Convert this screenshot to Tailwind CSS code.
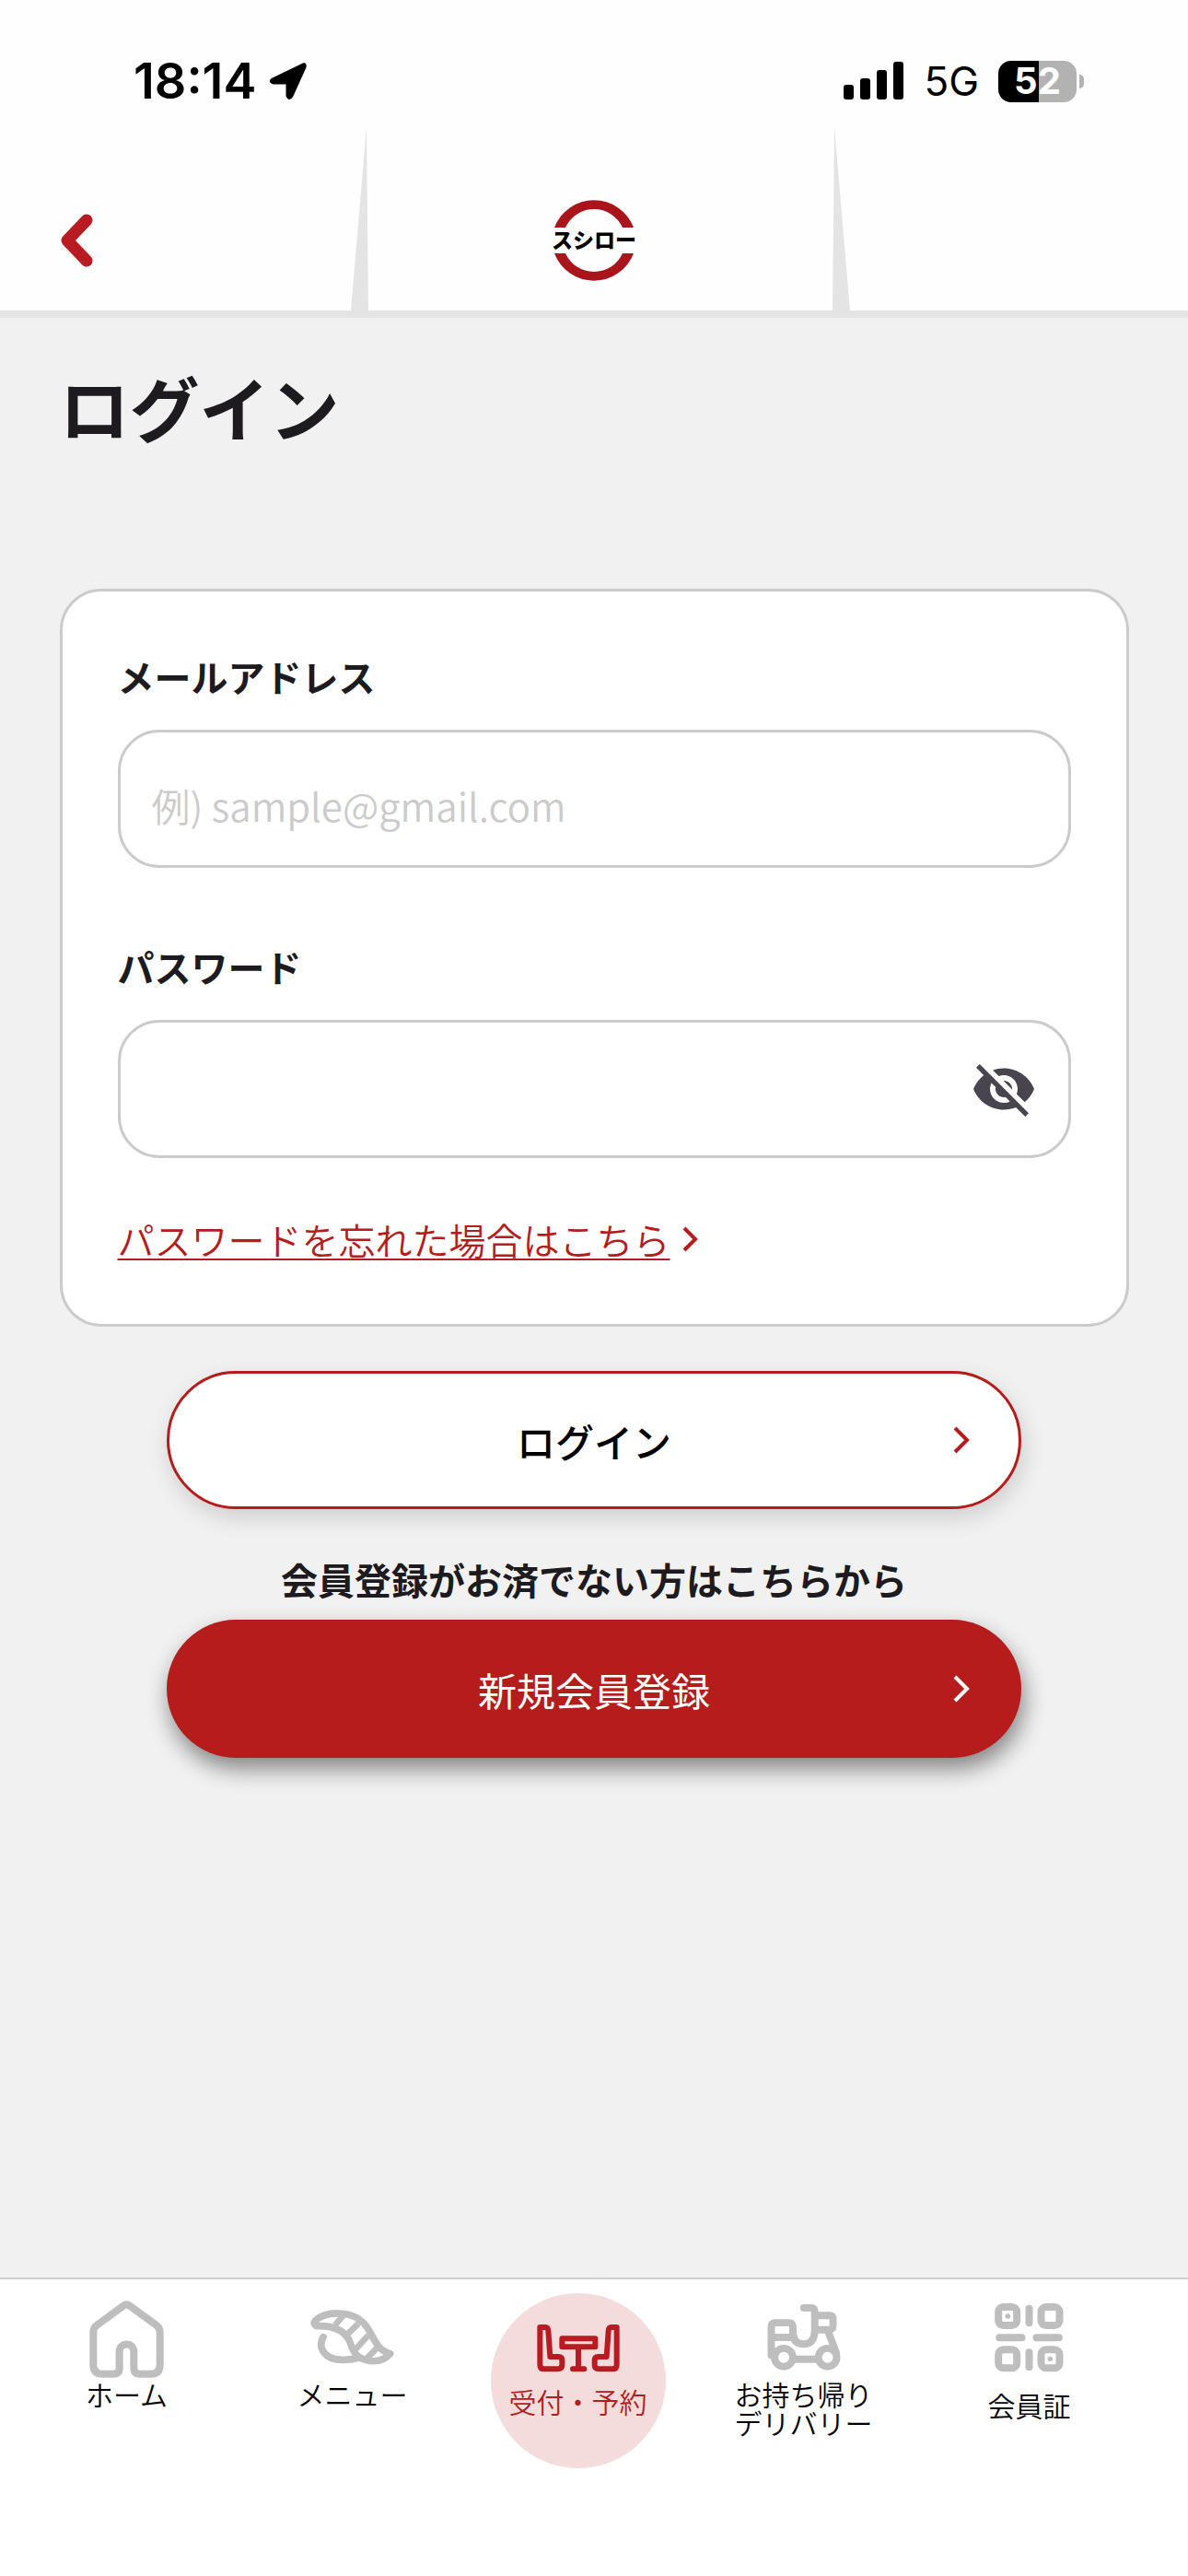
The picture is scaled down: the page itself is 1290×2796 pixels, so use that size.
<!DOCTYPE html>
<html lang="ja">
  <head>
    <meta charset="UTF-8" />
    <meta name="viewport" content="width=device-width, initial-scale=1.0" />
    <title>ログイン</title>
    <script src="https://cdn.jsdelivr.net/npm/@tailwindcss/browser@4"></script>
  </head>
  <body
    class="min-h-screen flex flex-col bg-[#f1f1f1] text-[#1d1b20] font-['Noto_Sans_CJK_JP',sans-serif]"
  >
    <!-- Header -->
    <header class="bg-[#fefefe] border-b-8 border-[#e4e4e4]">
      <!-- Status bar -->
      <div
        class="h-[138px] pt-[38px] pl-[145px] pr-[113px] flex items-center justify-between text-black font-['Inter',sans-serif]"
      >
        <div class="flex items-center gap-[14px]">
          <span class="text-[54px] leading-none font-semibold">18:14</span>
          <svg class="w-[42px] h-[42px]" viewBox="0 0 42 42">
            <path
              d="M4 19 37 3Q40 2 39 6L25 37Q22 42 20 37V23H5Q0 22 4 19Z"
              stroke="#000"
              stroke-width="3"
              stroke-linejoin="round"
            />
          </svg>
        </div>
        <div class="flex items-center gap-[21px]">
          <svg class="w-[66px] h-[42px]" viewBox="0 0 66 42">
            <rect x="0" y="25" width="11" height="16" rx="3" />
            <rect x="18" y="18" width="11" height="23" rx="3" />
            <rect x="36" y="9" width="11" height="32" rx="3" />
            <rect x="54" y="0" width="11" height="41" rx="3" />
          </svg>
          <span class="text-[44px] leading-none">5G</span>
          <div class="flex items-center gap-[3px]">
            <div
              class="w-[85px] h-[45px] rounded-[14px] bg-linear-to-r from-black from-52% to-[#b2b2b2] to-52% flex items-center justify-center text-white text-[40px] leading-none font-bold"
            >
              52
            </div>
            <div class="w-[5px] h-[15px] rounded-r-full bg-[#b2b2b2]"></div>
          </div>
        </div>
      </div>

      <!-- Logo bar -->
      <div class="h-[199px] grid grid-cols-[381fr_19px_504fr_19px_367fr]">
        <div class="flex items-center pt-[46px] pl-[65px]">
          <button type="button" aria-label="戻る">
            <svg class="w-9 h-[58px]" viewBox="0 0 36 58" fill="none">
              <path
                d="M29 7 8 29 29 51"
                stroke="#b81c22"
                stroke-width="13"
                stroke-linecap="round"
                stroke-linejoin="round"
              />
            </svg>
          </button>
        </div>
        <svg class="w-full h-[199px]" viewBox="0 0 19 199">
          <path d="M17 0 19 199H0Z" fill="#e4e4e4" />
        </svg>
        <div class="flex items-center justify-center pt-[46px] pr-[14px]">
          <svg class="w-24 h-24" viewBox="0 0 96 96">
            <path
              d="M5 34A46 46 0 0 1 91 34H79A34 34 0 0 0 17 34ZM5 62A46 46 0 0 0 91 62H79A34 34 0 0 1 17 62Z"
              fill="#a9151b"
            />
            <text
              x="48"
              y="56"
              text-anchor="middle"
              font-size="23"
              font-weight="900"
              fill="#000"
            >
              スシロー
            </text>
          </svg>
        </div>
        <svg class="w-full h-[199px]" viewBox="0 0 19 199">
          <path d="M2 0 19 199H0Z" fill="#e4e4e4" />
        </svg>
      </div>
    </header>

    <!-- Main Content -->
    <main class="flex-1 flex flex-col items-center">
      <h1 class="w-[90%] pt-12 text-[76px] leading-[96px] font-bold">
        ログイン
      </h1>

      <form class="w-full mt-[150px] flex flex-col items-center">
        <div
          class="w-[90%] px-[60px] pt-[62px] pb-[62px] bg-white border-3 border-[#cbcbcb] rounded-[45px]"
        >
          <label for="email" class="block text-[40px] leading-[60px] font-bold"
            >メールアドレス</label
          >
          <input
            type="email"
            id="email"
            placeholder="例) sample@gmail.com"
            class="w-full h-[150px] mt-7 px-[34px] pt-3 bg-white border-3 border-[#cbcbcb] rounded-[45px] text-[42px] font-[350] placeholder:text-[#cbcbcb]"
          />

          <label
            for="password"
            class="block mt-[77px] text-[40px] leading-[60px] font-bold"
            >パスワード</label
          >
          <div
            class="h-[150px] mt-7 pl-[34px] pr-[34px] flex items-center border-3 border-[#cbcbcb] rounded-[45px]"
          >
            <input
              type="password"
              id="password"
              class="flex-1 h-full text-[42px] outline-none"
            />
            <button type="button" id="togglePassword" aria-label="パスワードを表示">
              <svg class="w-[72px] h-[72px]" viewBox="0 0 24 24" fill="#49454f">
                <path
                  d="M12 7c2.76 0 5 2.24 5 5 0 .65-.13 1.26-.36 1.83l2.92 2.92c1.51-1.26 2.7-2.89 3.43-4.75-1.73-4.39-6-7.5-11-7.5-1.4 0-2.74.25-3.98.7l2.16 2.16C10.74 7.13 11.35 7 12 7zM2 4.27l2.28 2.28.46.46C3.08 8.3 1.78 10.02 1 12c1.73 4.39 6 7.5 11 7.5 1.55 0 3.03-.3 4.38-.84l.42.42L19.73 22 21 20.73 3.27 3 2 4.27zM7.53 9.8l1.55 1.55c-.05.21-.08.43-.08.65 0 1.66 1.34 3 3 3 .22 0 .44-.03.65-.08l1.55 1.55c-.67.33-1.41.53-2.2.53-2.76 0-5-2.24-5-5 0-.79.2-1.53.53-2.2zm4.31-.78l3.15 3.15.02-.16c0-1.66-1.34-3-3-3l-.17.01z"
                />
              </svg>
            </button>
          </div>

          <a
            href="#"
            class="mt-[58px] flex items-center gap-3 text-[40px] leading-[60px] font-[350] text-[#b51c1c]"
          >
            <span class="underline decoration-2 underline-offset-4"
              >パスワードを忘れた場合はこちら</span
            >
            <svg class="w-[18px] h-7" viewBox="0 0 18 28" fill="none">
              <path d="M3 2 15 14 3 26" stroke="currentColor" stroke-width="4" />
            </svg>
          </a>
        </div>

        <button
          type="submit"
          class="w-[72%] h-[150px] mt-12 px-[53px] flex items-center justify-between bg-white border-3 border-[#b51c1c] rounded-full text-[42px] font-medium text-black shadow-[3px_9px_24px_rgba(0,0,0,0.15)]"
        >
          <span class="w-[18px]"></span>
          ログイン
          <svg class="w-[18px] h-[30px] text-[#b51c1c]" viewBox="0 0 18 30" fill="none">
            <path d="M2 2 15 15 2 28" stroke="currentColor" stroke-width="4" />
          </svg>
        </button>
      </form>

      <p class="mt-[46px] text-[40px] leading-[60px] font-bold">
        会員登録がお済でない方はこちらから
      </p>
      <a
        href="#"
        class="w-[72%] h-[150px] mt-[14px] px-14 flex items-center justify-between bg-[#b51c1c] rounded-full text-[42px] text-white shadow-[3px_12px_24px_rgba(0,0,0,0.45)]"
      >
        <span class="w-[18px]"></span>
        新規会員登録
        <svg class="w-[18px] h-[30px]" viewBox="0 0 18 30" fill="none">
          <path d="M2 2 15 15 2 28" stroke="currentColor" stroke-width="4" />
        </svg>
      </a>
    </main>

    <!-- Bottom navigation -->
    <nav
      class="h-[324px] pl-[15px] pr-[50px] pt-[15px] grid grid-cols-5 justify-items-center items-start bg-white border-t-2 border-[#cfcfcf] text-[30px] leading-[31px] font-[350] text-black text-center"
    >
      <a href="#" class="flex flex-col items-center pt-2">
        <svg
          class="w-[81px] h-[84px] mb-[2px]"
          viewBox="111 109 243 252"
          fill="none"
          stroke="#bebebe"
          stroke-width="24"
          stroke-linejoin="round"
        >
          <path
            d="M222 126Q232 118 243 126L329 189Q341 198 341 212V318Q341 348 311 348H276Q256 348 256 328V275A23 23 0 0 0 209 275V328Q209 348 189 348H154Q124 348 124 318V212Q124 198 136 189Z"
          />
        </svg>
        ホーム
      </a>
      <a href="#" class="flex flex-col items-center pt-[18px]">
        <svg
          class="w-[91px] h-[60px] mb-4"
          viewBox="831 143 273 180"
          fill="none"
          stroke="#bebebe"
          stroke-width="23"
          stroke-linecap="round"
          stroke-linejoin="round"
        >
          <path
            d="M848 178C870 158 900 154 925 155C965 156 1000 172 1022 210C1040 240 1050 275 1091 286C1075 306 1050 311 1030 310C990 306 975 290 963 256C950 215 915 193 850 196Q838 188 848 178Z"
          />
          <path d="M873 232C855 265 875 308 940 306Q970 306 990 298" />
          <path
            d="M938 162 912 192M988 188 950 224M1020 226 976 274M1048 268 1012 304"
            stroke-width="20"
            stroke-linecap="butt"
          />
        </svg>
        メニュー
      </a>
      <a
        href="#"
        class="w-[190px] h-[190px] pt-[34px] flex flex-col items-center rounded-full bg-[#f4dcdc] text-[#b51c1c]"
      >
        <svg
          class="w-[90px] h-[52px] mb-4"
          viewBox="248 189 270 156"
          fill="none"
          stroke="#b81c22"
          stroke-width="18"
          stroke-linejoin="round"
          stroke-linecap="round"
        >
          <path
            d="M258 198H276Q284 198 285 210L291 294H318Q330 294 330 306V321Q330 334 316 334H272Q258 334 258 320Z"
          />
          <path
            d="M508 198H490Q482 198 481 210L475 294H448Q436 294 436 306V321Q436 334 450 334H494Q508 334 508 320Z"
          />
          <path d="M330 235H438V262H330ZM383 264V330M365 334H402" />
        </svg>
        受付・予約
      </a>
      <a href="#" class="flex flex-col items-center pt-3">
        <svg
          class="w-20 h-[72px] mb-[10px]"
          viewBox="158 122 241 218"
          fill="none"
          stroke="#bebebe"
          stroke-width="24"
          stroke-linejoin="round"
          stroke-linecap="round"
        >
          <circle cx="212" cy="297" r="30" />
          <circle cx="356" cy="297" r="30" />
          <path
            d="M250 303H320M278 134H302Q314 134 314 148V210Q312 253 278 253Q242 253 242 215V197Q242 183 228 183H185Q171 183 171 197V290M174 231H246"
          />
          <path
            d="M316 159H362Q374 159 374 171V192Q374 206 362 206H316M358 212 384 280"
          />
        </svg>
        お持ち帰り<br />デリバリー
      </a>
      <a href="#" class="flex flex-col items-center pt-[11px]">
        <svg
          class="w-[75px] h-[75px] mb-5"
          viewBox="902 119 224 225"
          fill="none"
          stroke="#bebebe"
          stroke-width="24"
          stroke-linecap="round"
        >
          <rect x="914" y="131" width="60" height="60" rx="16" />
          <rect x="1053" y="131" width="60" height="60" rx="16" />
          <rect x="914" y="270" width="60" height="60" rx="16" />
          <rect x="1053" y="270" width="60" height="60" rx="16" />
          <path d="M1014 136V183M1014 279V327M917 231H990M1038 231H1111" />
          <path d="M944 161h1M1082 300h1" stroke-width="16" />
        </svg>
        会員証
      </a>
    </nav>

    <script>
      // パスワードの表示切り替え
      const passwordInput = document.getElementById("password");
      document.getElementById("togglePassword").addEventListener("click", () => {
        passwordInput.type =
          passwordInput.type === "password" ? "text" : "password";
      });
    </script>
  </body>
</html>
